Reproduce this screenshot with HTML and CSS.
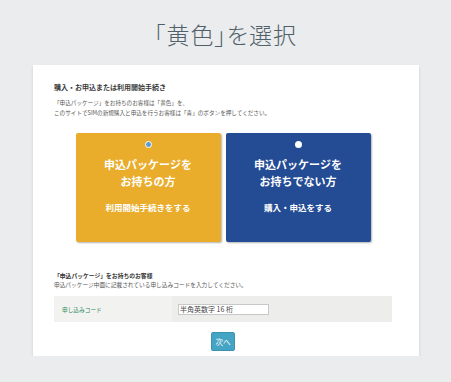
FILE: index.html
```html
<!DOCTYPE html>
<html lang="ja">
<head>
<meta charset="utf-8">
<link rel="stylesheet" href="styles.css">
</head>
<body>
<h1 class="title">「黄色」を選択</h1>
<div class="card">
  <h2 class="heading">購入・お申込または利用開始手続き</h2>
  <p class="lead">「申込パッケージ」をお持ちのお客様は「黄色」を、<br>このサイトでSIMの新規購入と申込を行うお客様は「青」のボタンを押してください。</p>
  <div class="choices">
    <div class="choice yellow">
      <span class="radio checked"></span>
      <div class="choice-title">申込パッケージを<br>お持ちの方</div>
      <div class="choice-sub">利用開始手続きをする</div>
    </div>
    <div class="choice blue">
      <span class="radio"></span>
      <div class="choice-title">申込パッケージを<br>お持ちでない方</div>
      <div class="choice-sub">購入・申込をする</div>
    </div>
  </div>
  <h3 class="sub-heading">「申込パッケージ」をお持ちのお客様</h3>
  <p class="sub-lead">申込パッケージ中面に記載されている申し込みコードを入力してください。</p>
  <div class="code-row">
    <div class="code-label">申し込みコード</div>
    <div class="code-field"><input class="code-input" type="text" placeholder="半角英数字 16 桁"></div>
  </div>
  <div class="actions"><button class="next" type="button">次へ</button></div>
</div>
</body>
</html>
```
FILE: styles.css
```css
* { box-sizing: border-box; }
html, body {
  margin: 0;
  background: #ebecee;
  font-family: "Noto Sans CJK JP", "Noto Sans", sans-serif;
}
.title {
  margin: 0;
  padding-top: 23px;
  font-size: 23px;
  line-height: 23px;
  font-weight: 300;
  color: #4f6068;
  text-align: center;
  font-feature-settings: "palt";
  letter-spacing: 1px;
}
.card {
  margin: 19px 0 0 33px;
  width: 386px;
  background: #fff;
  padding: 17px 27px 5px 21px;
  box-shadow: 0 2px 3px rgba(0,0,0,0.12);
}
.heading {
  margin: 0;
  font-size: 7px;
  line-height: 10px;
  font-weight: 700;
  color: #3a3a3a;
}
.lead {
  margin: 6px 0 0;
  font-size: 5.6px;
  line-height: 10px;
  color: #555;
}
.choices {
  margin-top: 15px;
  display: flex;
  justify-content: center;
  gap: 5px;
}
.choice {
  width: 145px;
  height: 109px;
  border-radius: 2px;
  padding-top: 8px;
  display: flex;
  flex-direction: column;
  align-items: center;
  color: #fff;
  box-shadow: 1px 1px 2px rgba(0,0,0,0.3);
}
.yellow { background: #e9ad2b; }
.blue { background: #234c95; }
.radio {
  width: 7px;
  height: 7px;
  border-radius: 50%;
  background: #fff;
}
.radio.checked {
  background: #5b9bd5;
  border: 1.5px solid #fff;
}
.choice-title {
  margin-top: 8px;
  font-size: 11px;
  line-height: 17px;
  font-weight: 700;
  text-align: center;
}
.choice-sub {
  margin-top: 11px;
  font-size: 8.5px;
  line-height: 12px;
  font-weight: 700;
}
.sub-heading {
  margin: 29px 0 0;
  font-size: 5.8px;
  line-height: 9px;
  font-weight: 700;
  color: #333;
}
.sub-lead {
  margin: 0;
  font-size: 5.7px;
  line-height: 9px;
  color: #555;
}
.code-row {
  margin-top: 7px;
  display: flex;
  height: 26px;
}
.code-label {
  width: 118px;
  background: #f2f2f1;
  padding-left: 8px;
  display: flex;
  align-items: center;
  font-size: 5.7px;
  color: #2d8a5c;
}
.code-field {
  flex: 1;
  background: #ededeb;
  display: flex;
  align-items: center;
  padding-left: 6px;
}
.code-input {
  width: 91px;
  height: 11px;
  margin: 0;
  padding: 0 1px;
  border: 1px solid #c8c8c8;
  background: #fff;
  font-family: inherit;
  font-size: 7px;
  color: #444;
}
.code-input::placeholder { color: #444; }
.actions {
  margin-top: 10px;
  display: flex;
  justify-content: center;
}
.next {
  width: 24px;
  height: 19px;
  padding: 0;
  border: 1px solid #3b93b3;
  border-radius: 2px;
  background: #45a3c4;
  color: #fff;
  font-family: inherit;
  font-size: 7.5px;
}
```
